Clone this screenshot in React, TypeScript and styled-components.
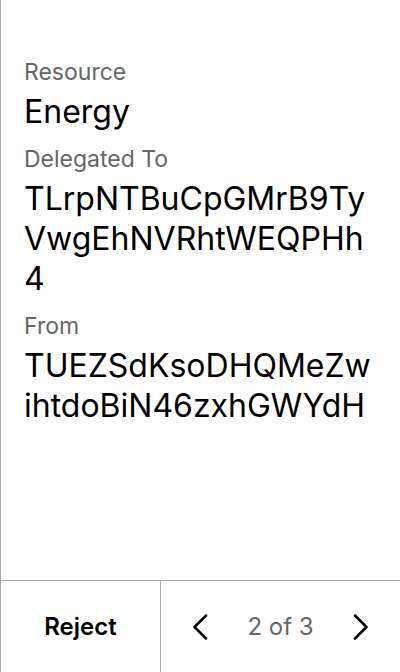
import React from "react";
import styled, { createGlobalStyle } from "styled-components";

const Global = createGlobalStyle`
  html, body { margin: 0; padding: 0; background: #fff; }
  body { font-family: Inter, "Noto Sans", sans-serif; }
  * { box-sizing: border-box; }
`;

const Screen = styled.div`
  width: 400px;
  height: 672px;
  display: flex;
  flex-direction: column;
  border-left: 1px solid #a8a8a8;
  background: #fff;
`;

const Content = styled.div`
  flex: 1;
  padding: 57px 23px 0 23px;
  display: flex;
  flex-direction: column;
`;

const Label = styled.div`
  font-size: 23px;
  line-height: 30px;
  color: #666;
  margin-bottom: 5px;
`;

const Value = styled.div`
  font-size: 32px;
  line-height: 40px;
  color: #000;
  word-break: break-all;
  margin-bottom: 12px;
`;

const Footer = styled.div`
  height: 92px;
  border-top: 1px solid #a8a8a8;
  display: flex;
`;

const RejectButton = styled.button`
  width: 160px;
  border: none;
  border-right: 1px solid #a8a8a8;
  background: transparent;
  font-family: Inter, sans-serif;
  font-size: 24px;
  font-weight: 600;
  color: #000;
  padding: 0;
`;

const Pager = styled.div`
  flex: 1;
  display: flex;
  align-items: center;
  justify-content: space-between;
  padding: 0 19px;
`;

const ArrowButton = styled.button`
  border: none;
  background: transparent;
  padding: 0;
  width: 40px;
  height: 40px;
  display: flex;
  align-items: center;
  justify-content: center;
`;

const PageText = styled.span`
  font-size: 24px;
  color: #666;
`;

const Chevron = ({ dir }: { dir: "left" | "right" }) => (
  <svg width="16" height="26" viewBox="0 0 16 26" fill="none">
    <path
      d={dir === "left" ? "M14 1.5 L2.5 13 L14 24.5" : "M2 1.5 L13.5 13 L2 24.5"}
      stroke="#000"
      strokeWidth="2.5"
      strokeLinecap="round"
      strokeLinejoin="round"
    />
  </svg>
);

export default function App() {
  return (
    <>
      <Global />
      <Screen>
        <Content>
          <Label>Resource</Label>
          <Value>Energy</Value>
          <Label>Delegated To</Label>
          <Value>TLrpNTBuCpGMrB9TyVwgEhNVRhtWEQPHh4</Value>
          <Label>From</Label>
          <Value>TUEZSdKsoDHQMeZwihtdoBiN46zxhGWYdH</Value>
        </Content>
        <Footer>
          <RejectButton>Reject</RejectButton>
          <Pager>
            <ArrowButton aria-label="Previous">
              <Chevron dir="left" />
            </ArrowButton>
            <PageText>2 of 3</PageText>
            <ArrowButton aria-label="Next">
              <Chevron dir="right" />
            </ArrowButton>
          </Pager>
        </Footer>
      </Screen>
    </>
  );
}
